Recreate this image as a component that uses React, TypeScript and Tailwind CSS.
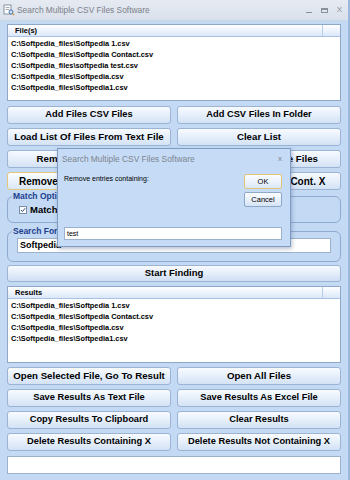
import React from 'react';

const font = { fontFamily: '"Liberation Sans", Arial, sans-serif' };

function Btn({ label, big }: { label: string; big?: boolean }) {
  return (
    <div
      className={`flex-1 h-[18px] rounded-[3px] border border-[#9cb4d4] bg-linear-to-b from-[#f8fbff] via-[#e6effb] to-[#d3e2f5] flex items-center justify-center font-bold text-black whitespace-nowrap overflow-hidden ${
        big ? 'text-[9.7px]' : 'text-[9.3px]'
      }`}
    >
      {label}
    </div>
  );
}

function FileList({ title, items, height }: { title: string; items: string[]; height: string }) {
  return (
    <div className={`${height} bg-white border border-[#8fa8c8] flex flex-col`}>
      <div className="h-[12px] flex border-b border-[#a9c3e6] bg-linear-to-b from-white to-[#dbe8fa]">
        <div className="flex-1 pl-[7px] text-[7.5px] font-bold text-black leading-[12px]">{title}</div>
        <div className="w-[18px] border-l border-[#b8cde9]" />
      </div>
      <div className="pt-[1px] pl-[3px]">
        {items.map((t) => (
          <div key={t} className="h-[11px] leading-[11px] text-[7.4px] font-bold text-black">
            {t}
          </div>
        ))}
      </div>
    </div>
  );
}

function Group({ label, children, height }: { label: string; children: React.ReactNode; height: string }) {
  return (
    <fieldset className={`${height} border border-[#8eaacf] rounded-[6px] pl-[4px] pr-[9px]`}>
      <legend className="px-[1px] text-[8.5px] font-bold text-[#1d3f8e] leading-[8px]">{label}</legend>
      {children}
    </fieldset>
  );
}

export default function App() {
  return (
    <div style={font} className="relative w-[350px] h-[480px] overflow-hidden bg-[#c3d9f4] border-r-[2px] border-r-[#9bb7dc]">
      {/* title bar */}
      <div className="h-[21px] flex items-center bg-linear-to-b from-[#e6ebf2] to-[#d9e1ec] border-b border-[#c9d6e6]">
        <svg width="12" height="12" viewBox="0 0 12 12" className="ml-[3px] mr-[2px]">
          <rect x="1" y="1" width="7" height="9" fill="#fff" stroke="#6b7a8c" strokeWidth="0.8" />
          <line x1="2.5" y1="3.5" x2="6.5" y2="3.5" stroke="#7d8a99" strokeWidth="0.7" />
          <line x1="2.5" y1="5.5" x2="6.5" y2="5.5" stroke="#7d8a99" strokeWidth="0.7" />
          <circle cx="8" cy="8" r="2" fill="#cfe3f7" stroke="#3d6aa3" strokeWidth="0.9" />
          <line x1="9.4" y1="9.4" x2="11.2" y2="11.2" stroke="#c08a2a" strokeWidth="1.2" />
        </svg>
        <span className="text-[8.4px] text-[#7b8089]">Search Multiple CSV Files Software</span>
        <div className="ml-auto flex items-center gap-[9px] mr-[6px] text-[#8a9099]">
          <div className="w-[6px] h-[1px] bg-[#8a9099] mt-[4px]" />
          <div className="w-[7px] h-[5px] border border-[#8a9099] border-t-[2px]" />
          <span className="text-[8px] leading-none">X</span>
        </div>
      </div>

      {/* body */}
      <div className="px-[7px] pt-[3px] flex flex-col">
        <FileList
          title="File(s)"
          height="h-[77px]"
          items={[
            'C:\\Softpedia_files\\Softpedia 1.csv',
            'C:\\Softpedia_files\\Softpedia Contact.csv',
            'C:\\Softpedia_files\\softpedia test.csv',
            'C:\\Softpedia_files\\Softpedia.csv',
            'C:\\Softpedia_files\\Softpedia1.csv',
          ]}
        />

        <div className="mt-[5px] flex flex-col gap-[4px]">
          <div className="flex gap-[6px]">
            <Btn label="Add Files CSV Files" />
            <Btn label="Add CSV Files In Folder" />
          </div>
          <div className="flex gap-[6px]">
            <Btn label="Load List Of Files From Text File" big />
            <Btn label="Clear List" big />
          </div>
          <div className="flex gap-[6px]">
            <Btn label="Remove Selected Files" big />
            <Btn label="Remove Unreadable Files" big />
          </div>
          <div className="flex gap-[6px]">
            <div className="flex-1 h-[18px] rounded-[3px] border border-[#e4c77a] bg-linear-to-b from-[#fbfdff] to-[#dae7f7] flex items-center justify-center font-bold text-[10px] whitespace-nowrap">
              Remove Entries Containing X
            </div>
            <div className="flex-1 h-[18px] rounded-[3px] border border-[#9cb4d4] bg-linear-to-b from-[#f8fbff] via-[#e6effb] to-[#d3e2f5] flex items-center justify-center font-bold text-[10px] whitespace-nowrap overflow-hidden">
              Remove Entries Not Cont. X
            </div>
          </div>
        </div>

        <div className="mt-[2px]">
          <Group label="Match Options" height="h-[31px]">
            <div className="flex items-center gap-[3px] pl-[7px] pt-[3px]">
              <div className="w-[8px] h-[8px] bg-white border border-[#7a8ea8] flex items-center justify-center">
                <svg width="6" height="6" viewBox="0 0 6 6">
                  <path d="M0.8 3 L2.4 4.6 L5.2 1.2" fill="none" stroke="#2a4a7a" strokeWidth="1" />
                </svg>
              </div>
              <span className="text-[9.5px] font-bold">Match case</span>
            </div>
          </Group>
        </div>

        <div className="mt-[4px]">
          <Group label="Search For Text" height="h-[35px]">
            <div className="ml-[5px] mt-[3px] h-[15px] bg-white border border-[#9bb1cc] text-[9px] font-bold leading-[13px] pl-[2px]">
              Softpedia
            </div>
          </Group>
        </div>

        <div className="mt-[3px] h-[17px] rounded-[3px] border border-[#9cb4d4] bg-linear-to-b from-[#f8fbff] via-[#e4edfa] to-[#cfdff4] flex items-center justify-center font-bold text-[9.5px]">
          Start Finding
        </div>

        <div className="mt-[4px]">
          <FileList
            title="Results"
            height="h-[77px]"
            items={[
              'C:\\Softpedia_files\\Softpedia 1.csv',
              'C:\\Softpedia_files\\Softpedia Contact.csv',
              'C:\\Softpedia_files\\Softpedia.csv',
              'C:\\Softpedia_files\\Softpedia1.csv',
            ]}
          />
        </div>

        <div className="mt-[4px] flex flex-col gap-[4px]">
          <div className="flex gap-[6px]">
            <Btn label="Open Selected File, Go To Result" big />
            <Btn label="Open All Files" big />
          </div>
          <div className="flex gap-[6px]">
            <Btn label="Save Results As Text File" />
            <Btn label="Save Results As Excel File" />
          </div>
          <div className="flex gap-[6px]">
            <Btn label="Copy Results To Clipboard" />
            <Btn label="Clear Results" />
          </div>
          <div className="flex gap-[6px]">
            <Btn label="Delete Results Containing X" />
            <Btn label="Delete Results Not Containing X" />
          </div>
        </div>

        <div className="mt-[5px] h-[18px] bg-white border border-[#9bb1cc]" />
      </div>

      {/* dialog */}
      <div className="absolute left-[57px] top-[148px] w-[234px] h-[99px] bg-[#c6dbf5] border border-[#7e9cc4] shadow-[1px_2px_4px_rgba(60,80,120,0.35)]">
        <div className="h-[20px] flex items-center pl-[4px] pr-[8px]">
          <span className="text-[8.4px] text-[#7d8590]">Search Multiple CSV Files Software</span>
          <span className="ml-auto text-[8px] text-[#7d8590]">x</span>
        </div>
        <div className="flex pl-[6px] pr-[8px]">
          <div className="flex-1 text-[7px] text-black pt-[5px]">Remove entries containing:</div>
          <div className="flex flex-col gap-[3px] pt-[5px]">
            <div className="w-[38px] h-[15px] rounded-[2px] border border-[#e0c47a] bg-linear-to-b from-[#fbfdff] to-[#dce8f7] flex items-center justify-center text-[7.5px]">
              OK
            </div>
            <div className="w-[38px] h-[15px] rounded-[2px] border border-[#8ea8c9] bg-linear-to-b from-[#fbfdff] to-[#d6e4f6] flex items-center justify-center text-[7.5px]">
              Cancel
            </div>
          </div>
        </div>
        <div className="mx-[6px] mt-[20px] mr-[8px] h-[13px] bg-white border border-[#9bb1cc] text-[7px] leading-[11px] pl-[2px]">
          test
        </div>
      </div>
    </div>
  );
}
